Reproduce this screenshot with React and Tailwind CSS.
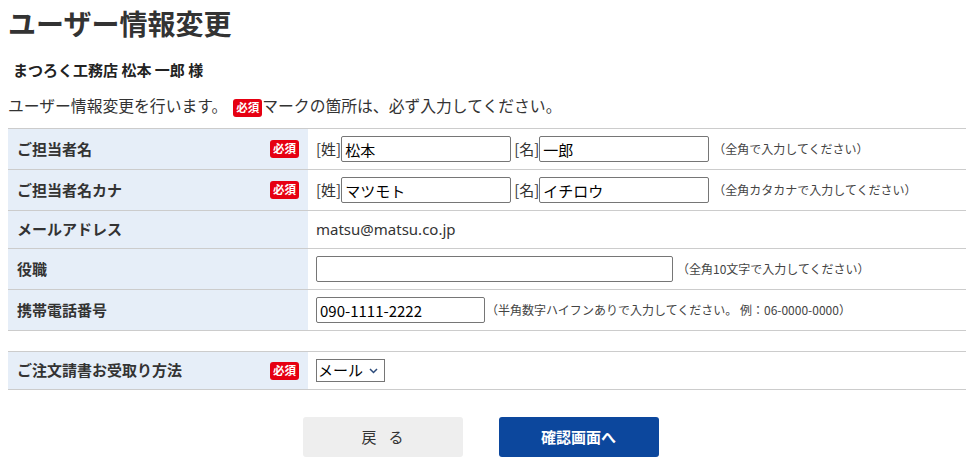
import React from 'react';

const font = { fontFamily: '"Noto Sans CJK JP", "Noto Sans", sans-serif' };

const Badge = () => (
  <span className="inline-flex items-center justify-center w-[29px] h-[18px] rounded-[3px] bg-[#e60012] text-white text-[11.5px] font-bold leading-none">
    必須
  </span>
);

const Row = ({ label, required, h = 'h-[40px]', top, children }) => (
  <div className={`grid grid-cols-[300px_1fr] border-b border-[#cccccc] ${top ? 'border-t' : ''}`}>
    <div className={`${h} bg-[#e6eef8] flex items-center justify-between pl-[9px] pr-[9px]`}>
      <span className="text-[15px] font-bold text-[#333]">{label}</span>
      {required && <Badge />}
    </div>
    <div className={`${h} flex items-center pl-2 text-[#333]`}>{children}</div>
  </div>
);

const Note = ({ children, className = '' }) => (
  <span className={`text-[12px] text-[#444] ${className}`}>{children}</span>
);

const Input = ({ w, value = '' }) => (
  <input
    readOnly
    defaultValue={value}
    className={`${w} h-[26px] border border-[#767676] rounded-[2px] px-[3px] text-[15px] text-black bg-white outline-none`}
  />
);

export default function App() {
  return (
    <div className="bg-white w-[966px] h-[470px] overflow-hidden text-[#333] pl-2" style={font}>
      <div className="h-[46px] flex items-center">
        <h1 className="text-[28px] font-bold text-[#333]">ユーザー情報変更</h1>
      </div>
      <div className="h-[48px] flex items-center pl-[5px]">
        <p className="text-[15px] font-bold text-[#222]">まつろく工務店 松本 一郎 様</p>
      </div>
      <div className="h-[24px] flex items-center mb-[10px] text-[15.8px] text-[#333]">
        <span>ユーザー情報変更を行います。</span>
        <span className="ml-[6px]"><Badge /></span>
        <span>マークの箇所は、必ず入力してください。</span>
      </div>

      <div>
        <Row label="ご担当者名" required top>
          <span className="text-[15px]">[姓]</span>
          <Input w="w-[170px]" value="松本" />
          <span className="text-[15px] ml-[3px]">[名]</span>
          <Input w="w-[170px]" value="一郎" />
          <Note className="ml-[4px]">（全角で入力してください）</Note>
        </Row>
        <Row label="ご担当者名カナ" required>
          <span className="text-[15px]">[姓]</span>
          <Input w="w-[170px]" value="マツモト" />
          <span className="text-[15px] ml-[3px]">[名]</span>
          <Input w="w-[170px]" value="イチロウ" />
          <Note className="ml-[4px]">（全角カタカナで入力してください）</Note>
        </Row>
        <Row label="メールアドレス" h="h-[37px]">
          <span className="text-[15px] text-[#333]" style={{ fontFamily: '"Noto Sans", sans-serif' }}>matsu@matsu.co.jp</span>
        </Row>
        <Row label="役職">
          <Input w="w-[357px]" />
          <Note className="ml-[4px]">（全角10文字で入力してください）</Note>
        </Row>
        <Row label="携帯電話番号">
          <Input w="w-[169px]" value="090-1111-2222" />
          <Note className="ml-[1px]">（半角数字ハイフンありで入力してください。 例：06-0000-0000）</Note>
        </Row>
      </div>

      <div className="mt-[20px]">
        <Row label="ご注文請書お受取り方法" required h="h-[37px]" top>
          <div className="relative w-[69px] h-[23px] border border-[#767676] flex items-center pl-[1px] bg-white">
            <span className="text-[15px] text-black">メール</span>
            <svg className="absolute right-[6px] top-[8px]" width="9" height="6" viewBox="0 0 9 6">
              <path d="M1 1l3.5 3.5L8 1" fill="none" stroke="#2b4a7a" strokeWidth="1.5" />
            </svg>
          </div>
        </Row>
      </div>

      <div className="flex justify-center gap-[36px] mt-[27px] pr-[13px]">
        <button className="w-[160px] h-[40px] rounded-[3px] bg-[#eeeeee] text-[15px] text-[#333] tracking-[12px] pl-[12px]">戻る</button>
        <button className="w-[160px] h-[40px] rounded-[3px] bg-[#0c479d] text-[15px] font-bold text-white">確認画面へ</button>
      </div>
    </div>
  );
}
